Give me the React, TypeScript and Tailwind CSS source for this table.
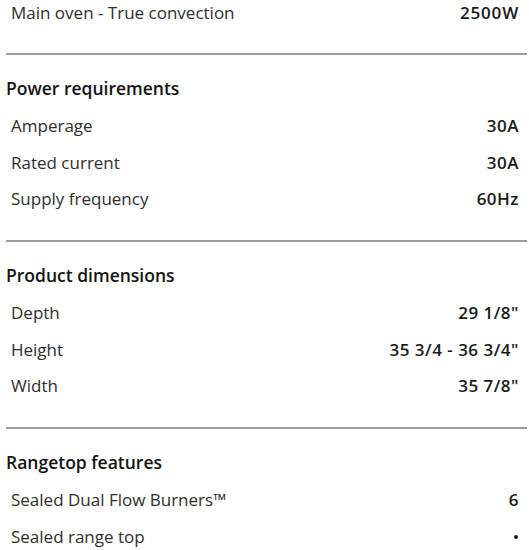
import React from "react";

type Row = { label: string; value: string; dot?: boolean };

const sections: { title: string; rows: Row[] }[] = [
  {
    title: "Power requirements",
    rows: [
      { label: "Amperage", value: "30A" },
      { label: "Rated current", value: "30A" },
      { label: "Supply frequency", value: "60Hz" },
    ],
  },
  {
    title: "Product dimensions",
    rows: [
      { label: "Depth", value: "29 1/8\"" },
      { label: "Height", value: "35 3/4 - 36 3/4\"" },
      { label: "Width", value: "35 7/8\"" },
    ],
  },
  {
    title: "Rangetop features",
    rows: [
      { label: "Sealed Dual Flow Burners\u2122", value: "6" },
      { label: "Sealed range top", value: "", dot: true },
    ],
  },
];

function SpecRow({ row }: { row: Row }) {
  return (
    <div className="flex h-[36.5px] items-center justify-between pl-[11px] pr-[10px]">
      <span className="text-[17px] text-[#2e2e2e]">{row.label}</span>
      {row.dot ? (
        <span className="mr-[1px] mt-[1px] h-[4px] w-[4px] rounded-full bg-[#1a1a1a]" />
      ) : (
        <span className="text-[17px] font-semibold tracking-[0.5px] text-[#1a1a1a]">{row.value}</span>
      )}
    </div>
  );
}

export default function App() {
  return (
    <div
      className="w-[529px] h-[550px] overflow-hidden bg-white"
      style={{ fontFamily: "'Open Sans', 'Noto Sans', sans-serif" }}
    >
      <div className="flex h-[26px] items-center justify-between pl-[11px] pr-[10px]">
        <span className="text-[17px] text-[#2e2e2e]">Main oven - True convection</span>
        <span className="text-[17px] font-semibold tracking-[0.8px] text-[#1a1a1a]">2500W</span>
      </div>
      <div className="mt-[27px]" />
      {sections.map((s) => (
        <div key={s.title}>
          <div className="ml-[6px] mr-[2px] h-[1.5px] bg-[#9c9c9c]" />
          <div className="pt-[21px]">
            <div className="flex h-[25px] items-center pl-[6px]">
              <span className="text-[17.5px] font-semibold text-[#141414]">{s.title}</span>
            </div>
            <div className="mt-[7.25px] pb-[22.75px]">
              {s.rows.map((r) => (
                <SpecRow key={r.label} row={r} />
              ))}
            </div>
          </div>
        </div>
      ))}
    </div>
  );
}
